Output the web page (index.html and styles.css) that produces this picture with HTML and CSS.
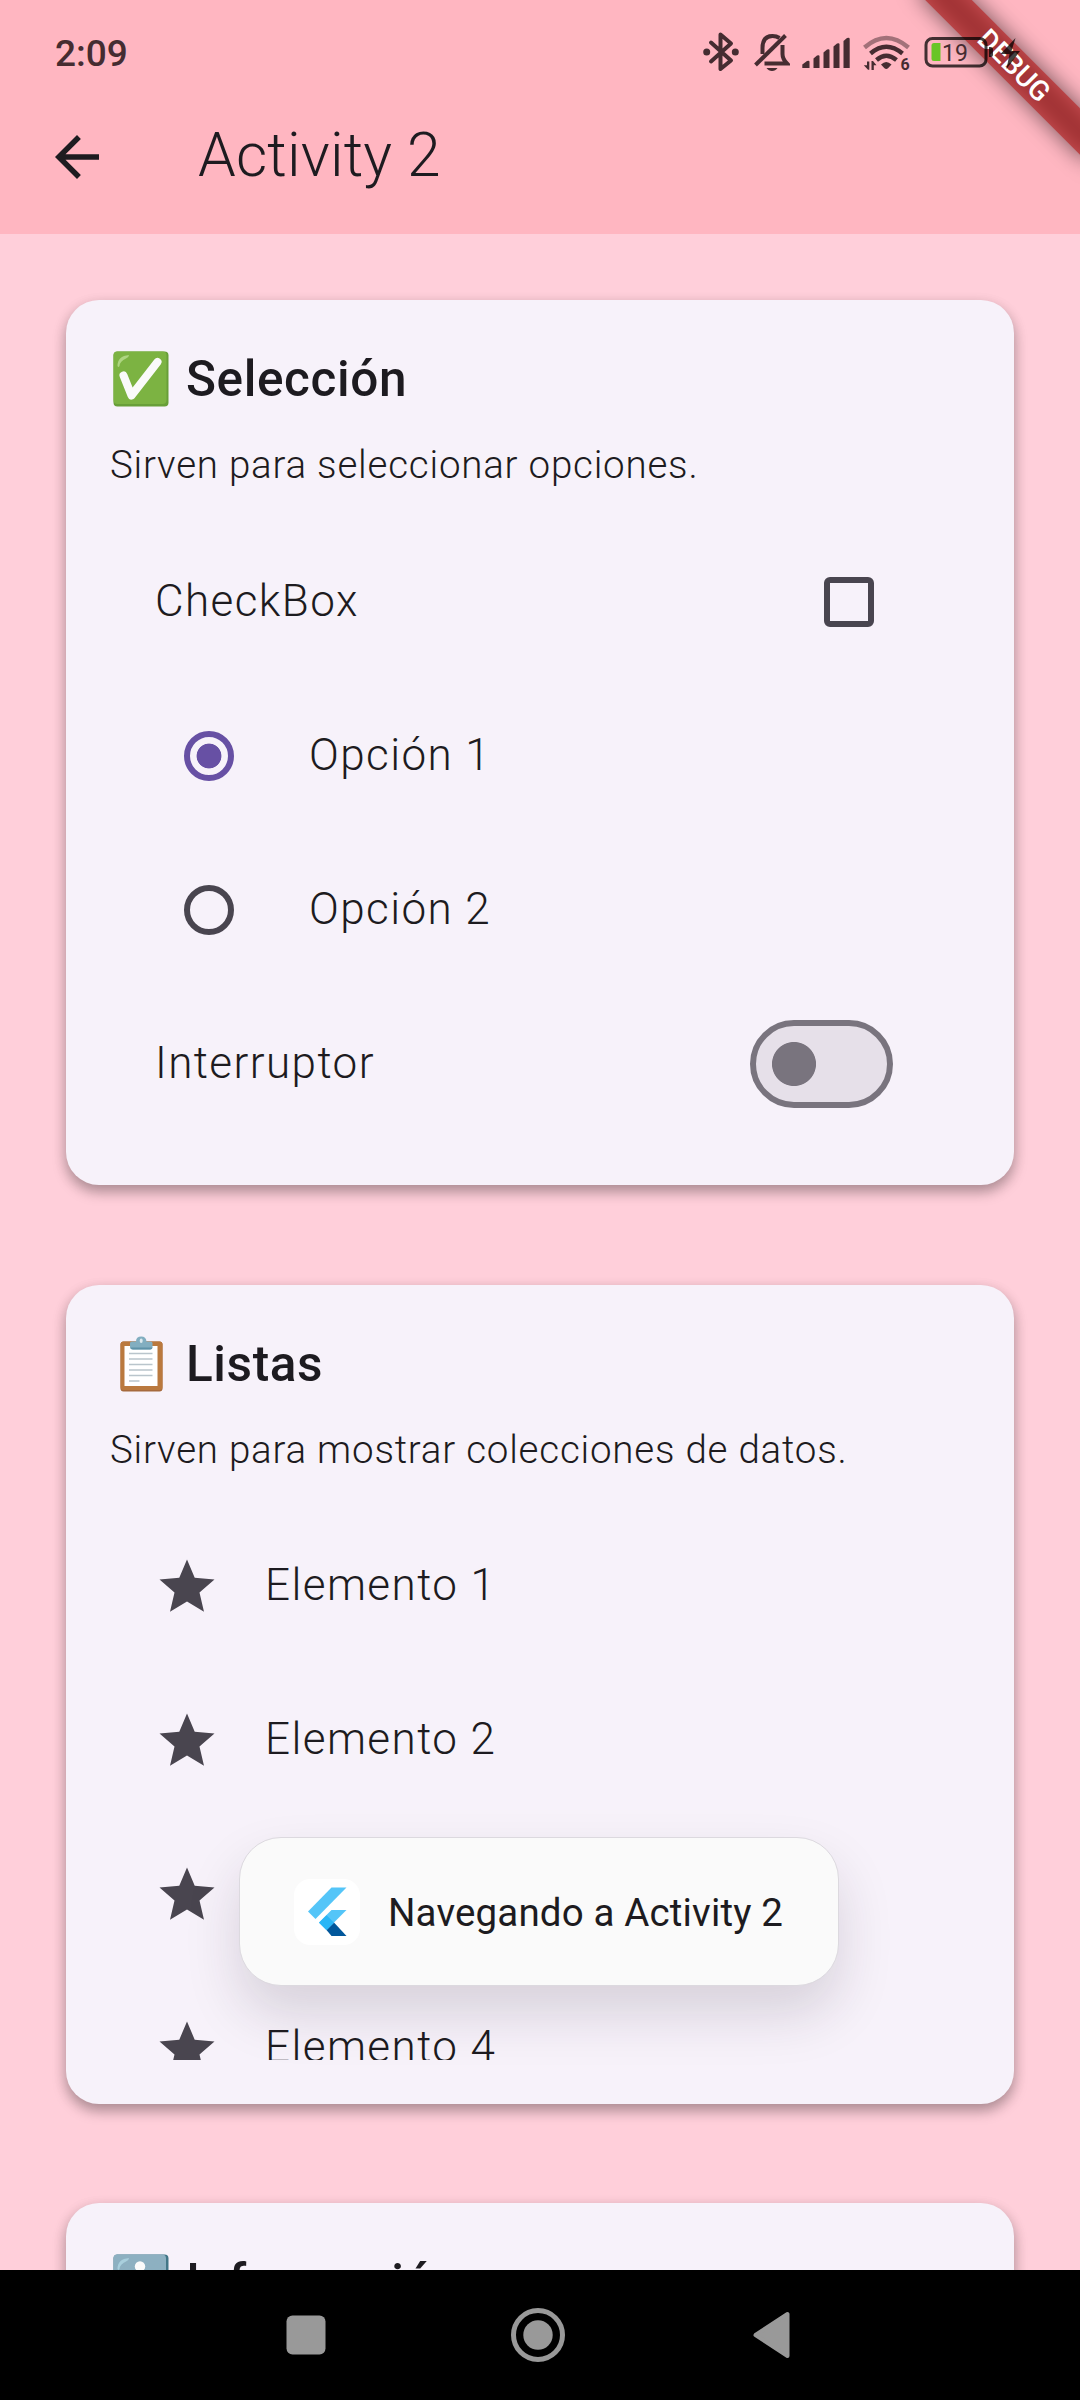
FILE: index.html
```html
<!DOCTYPE html>
<html lang="es">
<head>
<meta charset="utf-8">
<title>Activity 2</title>
<link rel="stylesheet" href="styles.css">
</head>
<body>
<div class="screen">
  <header class="appbar">
    <div class="status">
      <span class="clock">2:09</span>
      <div class="status-icons">
        <svg class="bt" width="36" height="40" viewBox="703 32 36 40"><g fill="none" stroke="#452c31" stroke-width="4" stroke-linecap="round" stroke-linejoin="round"><path d="M711 42.500L731 60.500L720.500 69V34.500L731 43.500L711 61.500"/></g><g fill="#452c31"><circle cx="706.700" cy="52" r="3.500"/><circle cx="735.300" cy="52" r="3.500"/></g></svg>
        <svg class="bell" width="36" height="40" viewBox="753.500 32 36 40"><g fill="none" stroke="#452c31" stroke-width="4"><path d="M755 65L785 35.500"/><path d="M762 54V48Q762 36 772 36Q776 36 779 38"/><path d="M782 45V54Q782 59 786.500 63.500H764"/></g><path d="M766 68H777Q775 71 771.500 71Q768 71 766 68Z" fill="#452c31"/></svg>
        <svg class="signal" width="48" height="40" viewBox="802 32 48 40" fill="#452c31"><path d="M802.300 68V64.500L807 61Q809.500 60 809.500 62V68Z"/><path d="M813.500 68V58.500L817 55.500Q819.500 54.500 819.500 56.500V68Z"/><path d="M823.500 68V52.500L827 49.500Q829.500 48.500 829.500 50.500V68Z"/><path d="M833.500 68V46.500L837 43.500Q839.500 42.500 839.500 44.500V68Z"/><path d="M843.500 68V41L847 38Q849.700 37 849.700 39V68Z"/></svg>
        <svg class="wifi" width="48" height="40" viewBox="862.500 32 48 40"><g fill="none" stroke="#452c31" stroke-width="4.400"><path d="M864 47.500Q885.700 28.500 908 47.500" opacity=".5"/><path d="M870 53.500Q885.700 40 902 53.500"/><path d="M876 60Q885.700 51.500 896 60"/></g><path d="M880.500 64.500Q885.700 59.500 891 64.500L887.500 68.200Q885.700 69.800 884 68.200Z" fill="#452c31"/><path d="M863.300 65.300H866.500V61.500H868.800V69.700H867.500ZM871 70V61H872.500L876 65.300H873.300V70Z" fill="#452c31"/><text x="900" y="70" class="six">6</text></svg>
        <svg class="battery" width="98" height="40" viewBox="922.500 32 98 40"><rect x="925.500" y="38.500" width="60" height="27.500" rx="6.500" fill="none" stroke="#000" stroke-opacity=".74" stroke-width="3"/><path d="M933.500 43H940V61H933.500Q931 61 931 58.500V45.500Q931 43 933.500 43Z" fill="#68c526"/><text x="941.500" y="61" class="pct">19</text><path d="M988.500 47H990Q992.500 47 992.500 49.500V54.500Q992.500 57 990 57H988.500Z" fill="#000" fill-opacity=".74"/><path d="M1015 38L1000 54H1009L1006 69L1019.500 51H1011Z" fill="#000" fill-opacity=".74"/></svg>
      </div>
    </div>
    <div class="toolbar">
      <svg class="back" width="66" height="66" viewBox="0 0 24 24" fill="#1d1b20"><path d="M20 11H7.830l5.590-5.590L12 4l-8 8 8 8 1.410-1.410L7.830 13H20v-2z"/></svg>
      <h1>Activity 2</h1>
    </div>
  </header>

  <main class="content">
    <section class="card">
      <h2><svg class="emoji" width="56" height="56" viewBox="0 0 56 56"><rect x=".5" y=".5" width="55" height="55" rx="4" fill="#689f38"/><rect x=".5" y=".5" width="53" height="52.500" rx="4" fill="#7cb342"/><path d="M4.500 15Q4.500 5 16 4Q16 6 13 7.500Q7 10 6.500 15Q5.500 17 4.500 15Z" fill="#aed581"/><path d="M10.500 24.500L18.500 44.500L44.500 11" fill="none" stroke="#fafafa" stroke-width="8" stroke-linecap="round" stroke-linejoin="round"/></svg><span>Selección</span></h2>
      <p>Sirven para seleccionar opciones.</p>
      <div class="tile"><span>CheckBox</span><i class="checkbox"></i></div>
      <div class="tile radio-tile"><i class="radio on"></i><span>Opción 1</span></div>
      <div class="tile radio-tile"><i class="radio"></i><span>Opción 2</span></div>
      <div class="tile switch-tile"><span>Interruptor</span><i class="switch"></i></div>
    </section>

    <section class="card">
      <h2><svg class="emoji" width="56" height="56" viewBox="0 0 56 56"><rect x="7.500" y="5.500" width="42" height="50" rx="3" fill="#a66a3d"/><rect x="7.500" y="5.500" width="42" height="48.500" rx="3" fill="#ba793e"/><rect x="11.500" y="10" width="33" height="40" fill="#fff"/><path d="M16 17.500H39.500M16 23H39.500M16 28.500H39.500M16 34H39.500M16 39.500H39.500M16 45H26.500" stroke="#b9c5cc" stroke-width="1.600"/><path d="M17 7Q17 5.500 19 5.500H23Q23 0.500 28.300 0.500Q33 0.500 33.500 5.500H37.500Q39.500 5.500 39.500 7V11Q39.500 13.500 37 13.500H19.500Q17 13.500 17 11Z" fill="#82aec0"/><path d="M17.500 11.500Q18 13.500 20 13.500H37Q39 13.500 39.500 11.500Z" fill="#5e92a8"/><ellipse cx="28.200" cy="4.700" rx="1.500" ry="2.300" fill="#dce9ee"/></svg><span>Listas</span></h2>
      <p>Sirven para mostrar colecciones de datos.</p>
      <div class="list">
        <div class="tile"><svg class="star" width="66" height="66" viewBox="0 0 24 24"><path d="M12 17.270L18.180 21l-1.640-7.030L22 9.240l-7.190-.61L12 2 9.190 8.630 2 9.240l5.460 4.730L5.820 21z"/></svg><span>Elemento 1</span></div>
        <div class="tile"><svg class="star" width="66" height="66" viewBox="0 0 24 24"><path d="M12 17.270L18.180 21l-1.640-7.030L22 9.240l-7.190-.61L12 2 9.190 8.630 2 9.240l5.460 4.730L5.820 21z"/></svg><span>Elemento 2</span></div>
        <div class="tile"><svg class="star" width="66" height="66" viewBox="0 0 24 24"><path d="M12 17.270L18.180 21l-1.640-7.030L22 9.240l-7.190-.61L12 2 9.190 8.630 2 9.240l5.460 4.730L5.820 21z"/></svg></div>
        <div class="tile"><svg class="star" width="66" height="66" viewBox="0 0 24 24"><path d="M12 17.270L18.180 21l-1.640-7.030L22 9.240l-7.190-.61L12 2 9.190 8.630 2 9.240l5.460 4.730L5.820 21z"/></svg><span>Elemento 4</span></div>
      </div>
    </section>

    <section class="card last">
      <h2><svg class="emoji" width="56" height="56" viewBox="0 0 56 56"><rect x=".5" y=".5" width="55" height="55" rx="4" fill="#427687"/><rect x=".5" y=".5" width="52.500" height="52.500" rx="4" fill="#8db0c1"/><path d="M4.500 15Q4.500 5 16 4Q16 6 13 7.500Q7 10 6.500 15Q5.500 17 4.500 15Z" fill="#a9cfdd"/><circle cx="27" cy="12.500" r="5.200" fill="#fafafa"/><path d="M21 22H31V42H36V46H20V42H24V26H21Z" fill="#fafafa"/></svg><span>Información</span></h2>
    </section>
  </main>

  <nav class="navbar">
    <svg width="40" height="54" viewBox="0 0 40 54" fill="#999"><rect x=".5" y="7.500" width="39" height="39" rx="6"/></svg>
    <svg width="54" height="54" viewBox="0 0 54 54"><circle cx="27" cy="27" r="24.500" fill="none" stroke="#999" stroke-width="5"/><circle cx="27" cy="27" r="14.700" fill="#999"/></svg>
    <svg width="37" height="54" viewBox="0 0 37 54"><path d="M2.500 27L34.500 6V48Z" fill="#999" stroke="#999" stroke-width="4" stroke-linejoin="round"/></svg>
  </nav>

  <div class="toast">
    <svg width="66" height="66" viewBox="0 0 66 66"><rect width="66" height="66" rx="16" fill="#fff"/><path d="M37.500 8.500H52.500L21.500 40L14 32.500Z" fill="#54c5f8"/><path d="M37.500 31H52.500L32.500 51L25 43.500Z" fill="#54c5f8"/><path d="M32.500 51L40 43.500L52.500 57H37.500Z" fill="#01579b"/><path d="M25 43.700L32.500 36.300L40 43.700L32.500 51.200Z" fill="#29b6f6"/></svg>
    <span>Navegando a Activity 2</span>
  </div>

  <div class="banner"><div class="banner-shadow"></div><div class="banner-band">DEBUG</div></div>
</div>
</body>
</html>
```
FILE: styles.css
```css
* { box-sizing: border-box; margin: 0; padding: 0; }

body { font-family: Roboto, "Liberation Sans", sans-serif; color: #1d1b20; }

svg { display: block; flex: none; }

.screen {
  position: relative;
  width: 1080px;
  height: 2400px;
  overflow: hidden;
  display: flex;
  flex-direction: column;
  background: #ffcfda;
}

/* App bar */
.appbar { height: 234px; flex: none; background: #ffb6c1; }

.status {
  position: relative;
  z-index: 3;
  height: 80px;
  padding: 0 59.500px 0 55px;
  display: flex;
  justify-content: space-between;
}

.clock { padding-top: 32px; font-size: 37px; line-height: 44px; font-weight: 500; color: #452c31; }

.status-icons { display: flex; padding-top: 32px; }
.bell { margin-left: 14.500px; }
.signal { margin-left: 12.500px; }
.wifi { margin-left: 12.500px; }
.battery { margin-left: 12px; }
.six { font-size: 16px; font-weight: 700; fill: #452c31; }
.pct { font-size: 23px; fill: #452c31; }

.toolbar { height: 154px; padding-left: 44px; display: flex; align-items: center; }
h1 { margin: -2px 0 0 88px; font-size: 60.500px; font-weight: 300; line-height: 76px; letter-spacing: .150px; }

/* Cards */
.content {
  flex: 1;
  min-height: 0;
  overflow: hidden;
  padding: 66px;
  display: flex;
  flex-direction: column;
  gap: 99.600px;
}

.card {
  flex: none;
  padding: 44px;
  border-radius: 33px;
  background: #f7f2fa;
  box-shadow: 0 7px 14px rgba(0, 0, 0, .27), 0 4px 14px rgba(0, 0, 0, .1);
}

h2 { height: 70px; display: flex; align-items: center; gap: 17px; font-size: 49.500px; font-weight: 500; line-height: 70px; letter-spacing: .620px; }
.emoji { margin-left: 3px; }
p { height: 111px; padding-top: 23px; font-size: 38.500px; font-weight: 300; line-height: 55px; letter-spacing: .780px; }

.tile {
  height: 154px;
  padding: 0 44px;
  display: flex;
  align-items: center;
  font-size: 44px;
  font-weight: 300;
  line-height: 66px;
  letter-spacing: 1.420px;
}
.tile span { margin: -3px 0 0 1px; }

.checkbox { width: 50px; height: 50px; margin: 0 52px 0 auto; border: 6px solid #49454f; border-radius: 6px; }
.radio-tile { padding-left: 74px; gap: 74px; }
.radio { width: 50px; height: 50px; border: 6px solid #49454f; border-radius: 50%; }
.radio.on { border-color: #6750a4; background: radial-gradient(circle, #6750a4 12px, transparent 12.800px); }
.switch {
  width: 143px;
  height: 88px;
  margin: 0 33px 0 auto;
  border: 6px solid #79747e;
  border-radius: 44px;
  background: radial-gradient(circle at 38px 50%, #79747e 21.600px, #e6e0e9 22.400px);
}

.list { height: 550px; overflow: hidden; }
.list .tile { gap: 44px; }
.star { fill: #49454f; }

/* System navigation */
.navbar {
  position: relative;
  height: 130px;
  flex: none;
  padding: 0 290px 0 286px;
  background: #000;
  display: flex;
  align-items: center;
  justify-content: space-between;
}
.navbar svg:nth-child(2) { margin-right: 3px; }

/* Floating message */
.toast {
  position: absolute;
  left: 239px;
  top: 1837px;
  width: 600px;
  height: 149px;
  padding-left: 54px;
  display: flex;
  align-items: center;
  gap: 28px;
  border: 1px solid #dcd9df;
  border-radius: 42px;
  background: #fafafa;
  box-shadow: 0 28px 54px rgba(40, 30, 50, .15);
  font-size: 38.500px;
  line-height: 50px;
  letter-spacing: .150px;
  white-space: nowrap;
}
.toast span { margin-top: 3px; }

/* Corner ribbon */
.banner { position: absolute; z-index: 2; right: 0; top: 0; width: 250px; height: 250px; overflow: hidden; }
.banner-shadow, .banner-band {
  position: absolute;
  left: 64px;
  top: 49px;
  width: 240px;
  height: 33px;
  transform: rotate(45deg);
}
.banner-shadow { background: rgba(0, 0, 0, .55); filter: blur(11px); }
.banner-band {
  background: rgba(183, 28, 28, .63);
  color: #fff;
  font-size: 28px;
  font-weight: 500;
  line-height: 34px;
  text-align: center;
}
```
